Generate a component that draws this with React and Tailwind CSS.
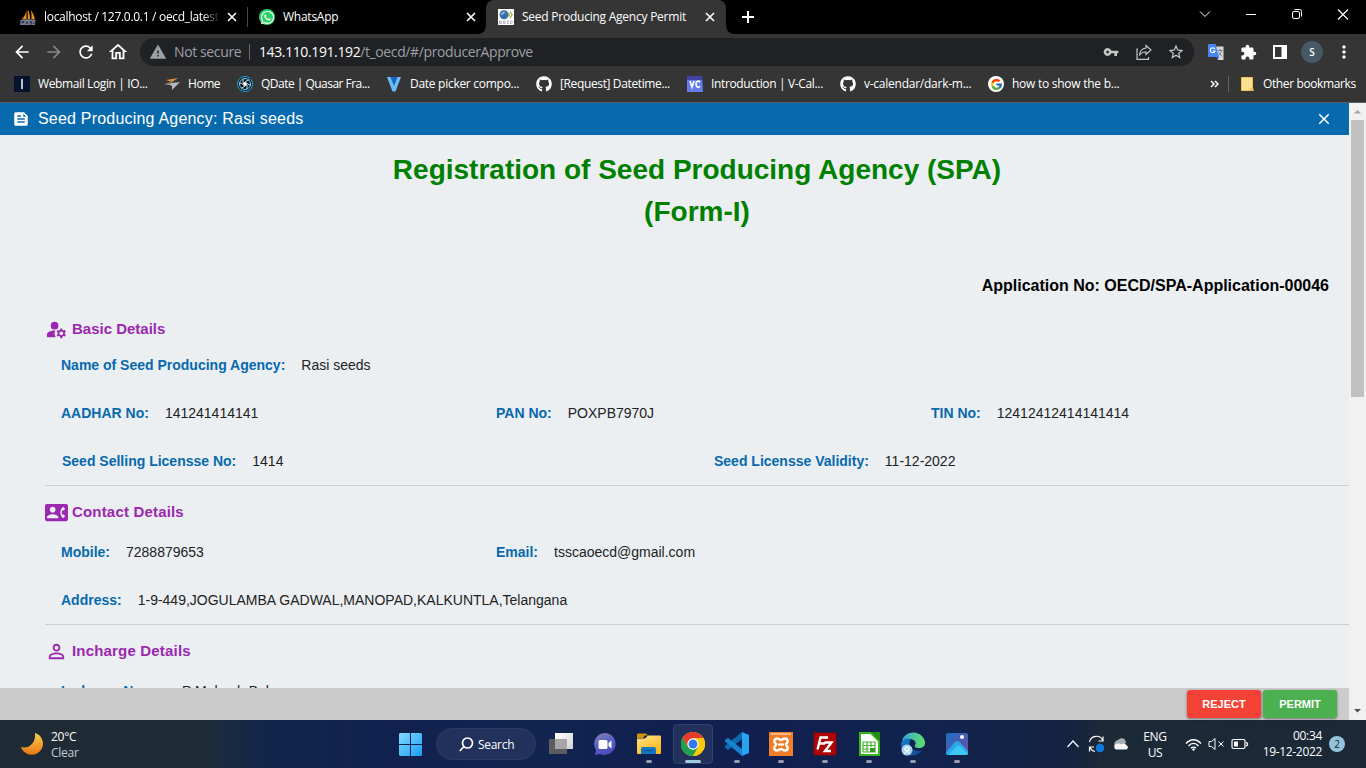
import React from "react";
import {
  MdArrowBack, MdArrowForward, MdRefresh, MdOutlineHome, MdWarning, MdVpnKey, MdStarBorder,
  MdExtension, MdMoreVert, MdClose, MdFeed, MdManageAccounts, MdContactPhone, MdPersonOutline,
} from "react-icons/md";
import { FaGithub, FaWhatsapp } from "react-icons/fa";
import { FcGoogle } from "react-icons/fc";

const UI = "font-['Open_Sans','Noto_Sans',sans-serif]";

/* ---------- browser chrome ---------- */

function TabClose() {
  return (
    <svg width="10" height="10" viewBox="0 0 10 10" className="shrink-0" stroke="#fff" strokeWidth="1.6">
      <path d="M1 1l8 8M9 1l-8 8" />
    </svg>
  );
}

function MyAdminIcon() {
  return (
    <svg width="16" height="16" viewBox="0 0 16 16" className="shrink-0">
      <path d="M6.6 .5C6.4 4 4.500 7.500 1.500 10.500l5-.6zM7.600.5l.2 9.400 2.200.1C10 6 9.200 2.700 7.600.5zM10.600 1c1 3 1.200 6 .7 9l3.700.5C14.200 6.500 12.500 3 10.600 1z" fill="#e8901c" />
      <path d="M.5 11c4-1 10-1 15-.2L15 16H0z" fill="#777a90" />
      <path d="M2 14.500v-2h2v1H2M6 15l1-2.500L8 15M12 12.500h-2v1.200h2V15h-2M14 12.500V15" stroke="#2b2d40" fill="none" strokeWidth=".8" />
    </svg>
  );
}

function OecdIcon() {
  return (
    <svg width="16" height="16" viewBox="0 0 16 16" className="shrink-0">
      <path d="M0 0h16v16H0z" fill="#fff" />
      <circle cx="6" cy="5.800" r="4.500" fill="#3a6ea8" />
      <path d="M2.500 5c1.500-2 3-2.500 5-2.300L6 5 3.500 6z" fill="#8db4dc" />
      <path d="M9.500 3l2 2.700-2 2.700M12 2.500l2.200 3.200L12 9" stroke="#93b04c" fill="none" strokeWidth="1.200" />
      <path d="M1.500 12h2v2.500h-2zM7.500 12h-2v2.500h2M5.500 13.200h2M11 12H9.500v2.500H11M12.500 12h1.200l.8 1.200-.8 1.300h-1.200z" stroke="#a9aeb4" fill="none" strokeWidth=".9" />
    </svg>
  );
}

function TabStrip() {
  return (
    <div className="flex h-[34px] bg-black text-[12px] text-white">
      <div className="flex w-[247px] items-center pl-5 pr-[10px]">
        <MyAdminIcon />
        <div className="ml-2 w-[176px] overflow-hidden whitespace-nowrap tracking-[-0.3px] [mask-image:linear-gradient(to_right,#000_158px,transparent)]">localhost / 127.0.0.1 / oecd_latest</div>
        <div className="ml-[7px]"><TabClose /></div>
      </div>
      <div className="mt-[7px] h-5 w-px bg-[#4a4a4a]" />
      <div className="flex w-[238px] items-center pl-[11px] pr-[10px]">
        <span className="relative flex size-4 items-center justify-center rounded-full bg-[#25d366]">
          <FaWhatsapp size={15} color="#fff" />
        </span>
        <span className="ml-2 tracking-[-0.25px]">WhatsApp</span>
        <span className="ml-auto"><TabClose /></span>
      </div>
      <div className="relative flex w-[240px] items-center rounded-t-lg bg-[#353535] pl-3 pr-[11px]">
        <svg className="absolute -left-2 bottom-0" width="8" height="8"><path d="M8 0v8H0a8 8 0 0 0 8-8" fill="#353535" /></svg>
        <svg className="absolute -right-2 bottom-0" width="8" height="8"><path d="M0 0v8h8a8 8 0 0 1-8-8" fill="#353535" /></svg>
        <OecdIcon />
        <span className="ml-2 whitespace-nowrap tracking-[-0.24px]">Seed Producing Agency Permit</span>
        <span className="ml-auto"><TabClose /></span>
      </div>
      <svg className="ml-4 mt-[11px]" width="12" height="12" stroke="#fff" strokeWidth="2"><path d="M6 0v12M0 6h12" /></svg>
      <svg className="ml-auto" width="176" height="34" fill="none" stroke="#fff">
        <path d="M10 11.500l5 5 5-5" />
        <path d="M56 14.500h10" />
        <rect x="102.500" y="11.500" width="7" height="7" rx="1.500" />
        <path d="M104.500 9.500h5a2 2 0 0 1 2 2v5" />
        <path d="M148 9.500l10 10M158 9.500l-10 10" strokeWidth="1.200" />
      </svg>
    </div>
  );
}

function Toolbar() {
  return (
    <div className="flex h-[34px] items-center bg-[#353535] pt-0.5 text-white">
      <div className="flex w-[140px] items-center gap-3 pl-3">
        <MdArrowBack size={20} className="shrink-0" />
        <MdArrowForward size={20} color="#868686" className="shrink-0" />
        <MdRefresh size={20} className="shrink-0" />
        <MdOutlineHome size={22} className="-ml-px shrink-0" />
      </div>
      <div className="flex h-7 w-[1054px] items-center rounded-full bg-[#202124] pl-[9px] pr-[9px] text-[14px] text-[#9aa0a6]">
        <MdWarning size={18} />
        <span className="ml-[7px] w-[67px] whitespace-nowrap pb-px tracking-[-0.38px]">Not secure</span>
        <span className="ml-[8px] h-4 w-px bg-[#6b6c6f]" />
        <span className="ml-[9px] whitespace-nowrap pb-px tracking-[-0.39px]"><span className="text-white">143.110.191.192</span>/t_oecd/#/producerApprove</span>
        <MdVpnKey size={16} className="ml-auto" color="#c4c7c5" />
        <svg className="ml-4" width="18" height="18" viewBox="0 0 18 18" fill="none" stroke="#c4c7c5" strokeWidth="1.200">
          <path d="M3 6H2v10.300h11.500V14" />
          <path d="M11 2.500l5 4.500-5 4.500V9C8 8.800 6 9.800 4.300 12.500 4.800 8 7 5.500 11 5z" />
        </svg>
        <MdStarBorder size={18} className="ml-[14px]" color="#c4c7c5" />
      </div>
      <svg className="ml-[14px]" width="16" height="16" viewBox="0 0 16 16">
        <path d="M7 2.500h8.500V16H10z" fill="#d5d7da" />
        <path d="M9.500 6.500h5M12 5v1.500M13.500 6.500C13 9 12 10.500 10 12M10.500 8.500l3.500 4" stroke="#68747d" fill="none" strokeWidth=".9" />
        <path d="M1 0h6.500l3.500 13H1a1 1 0 0 1-1-1V1a1 1 0 0 1 1-1z" fill="#4285f4" />
        <path d="M8 13h3l-1.500 3z" fill="#2a56c6" />
        <path d="M6.800 5A2.400 2.400 0 1 0 7 7H5" stroke="#fff" fill="none" strokeWidth="1.100" />
      </svg>
      <MdExtension size={17} className="ml-4" />
      <svg className="ml-4" width="14" height="14"><path d="M0 0h14v14H0z" fill="#fff" /><path d="M2 2h6.500v10H2z" fill="#353535" /></svg>
      <span className="ml-[14px] flex size-[22px] items-center justify-center rounded-full bg-[#455a64] text-[10px] font-semibold">S</span>
      <MdMoreVert size={20} className="ml-[11px]" />
    </div>
  );
}

function Bookmark({ className, icon, label }) {
  return (
    <div className={"flex shrink-0 items-center gap-2 whitespace-nowrap " + className}>
      <span className="flex size-4 shrink-0 items-center justify-center">{icon}</span>
      <span className="pb-px">{label}</span>
    </div>
  );
}

function Bookmarks() {
  return (
    <div className="flex h-[34px] items-center bg-[#353535] pb-0.5 pl-[14px] text-[12px] text-white">
      <Bookmark className="w-[150px] tracking-[-0.38px]" label="Webmail Login | IO..." icon={<svg width="16" height="16"><path d="M0 0h16v16H0z" fill="#06112d" /><path d="M7 3h2v10H7z" fill="#b9c0cf" /></svg>} />
      <Bookmark className="w-[73px] tracking-[-0.45px]" label="Home" icon={<svg width="16" height="16"><path d="M2 4l12-2-6 4z" fill="#e09040" /><path d="M0 8l16-2-8 8v-4L6 9z" fill="#b9b9b9" /><path d="M1 7.500l9-2.500-4 3z" fill="#8a7660" /></svg>} />
      <Bookmark className="w-[149px] tracking-[-0.52px]" label="QDate | Quasar Fra..." icon={
        <svg width="16" height="16" viewBox="-8 -8 16 16">
          <circle r="7.500" fill="#07131d" stroke="#25a5e4" />
          <circle r="5.500" fill="none" stroke="#87cfee" />
          <g stroke="#c7e8f5" fill="none"><path d="M-2-1v-4M0-2l4-2.500M2-.5l3.500 2M2 1v4M0 2l-4 2.500M-2 .5l-3.500-2" /></g>
          <circle r="2" fill="#fff" />
        </svg>} />
      <Bookmark className="w-[150px] tracking-[-0.28px]" label="Date picker compo..." icon={<svg width="16" height="16"><path d="M1 1h6l1 5 1-5h6L9.500 15.500h-3z" fill="#6dbaf5" /><path d="M4.500 1h7L8 10z" fill="#1867c0" /></svg>} />
      <Bookmark className="w-[151px] tracking-[-0.37px]" label="[Request] Datetime..." icon={<FaGithub size={16} />} />
      <Bookmark className="w-[153px] tracking-[-0.35px]" label="Introduction | V-Cal..." icon={
        <svg width="16" height="16"><path d="M1 0h14l1 16H0V4z" fill="#667eea" /><path d="M1 0h14v4H0z" fill="#4043a5" /><path d="M3 5l2 6 2-6M13 6.200c-2-2-4-.8-4 2s2 4 4 2" fill="none" stroke="#fff" strokeWidth="1.600" /></svg>} />
      <Bookmark className="w-[148px] tracking-[-0.25px]" label="v-calendar/dark-m..." icon={<FaGithub size={16} />} />
      <Bookmark className="w-[140px] tracking-[-0.26px]" label="how to show the b..." icon={<span className="flex size-4 items-center justify-center rounded-full bg-white"><FcGoogle size={13} /></span>} />
      <svg className="ml-auto" width="9" height="8" fill="none" stroke="#fff" strokeWidth="1.500"><path d="M1 1l3 3-3 3M5 1l3 3-3 3" /></svg>
      <span className="ml-[9px] h-4 w-px bg-[#5f6368]" />
      <svg className="ml-3" width="13" height="14"><path d="M.5.5h11v10l.8 3H.5z" fill="#fee191" stroke="#f0c34e" /><path d="M9.500 10l2.500 3.500H9z" fill="#e9b93e" /></svg>
      <span className="ml-[9px] w-[103px] whitespace-nowrap pb-px tracking-[-0.38px]">Other bookmarks</span>
    </div>
  );
}

/* ---------- page ---------- */

function Field({ label, value, className = "pl-4" }) {
  return (
    <div className={"flex h-12 items-center gap-4 whitespace-nowrap text-[14px] " + className}>
      <span className="font-bold text-[#0769ad]">{label}</span>
      <span className="text-[#222]">{value}</span>
    </div>
  );
}

function SectionTitle({ icon, children, className = "" }) {
  return (
    <div className={"flex h-6 items-center gap-1 text-[15px] font-bold text-[#9c27b0] " + className}>
      <span className="flex w-[23px] justify-center">{icon}</span>
      <span>{children}</span>
    </div>
  );
}

function Page() {
  return (
    <div className="flex h-[617px] font-['Liberation_Sans',Arial,sans-serif]">
      <div className="flex w-[1349px] flex-col">
        <div className="flex h-8 shrink-0 items-center bg-[#086aae] pl-3 pr-4 text-white">
          <MdFeed size={18} />
          <span className="ml-2 text-[16px] tracking-[0.2px]">Seed Producing Agency: Rasi seeds</span>
          <MdClose size={18} className="ml-auto" />
        </div>
        <main className="h-[553px] overflow-hidden bg-[#ebeff2] pl-[45px] pt-[14px]">
          <h1 className="text-center text-[28px] font-bold leading-[42px] text-[#008000]">Registration of Seed Producing Agency (SPA)<br />(Form-I)</h1>
          <div className="mt-[41px] h-6 pr-5 text-right text-[16px] font-bold leading-6 text-black">Application No: OECD/SPA-Application-00046</div>
          <SectionTitle className="mt-[19px]" icon={<MdManageAccounts size={23} />}>Basic Details</SectionTitle>
          <Field label="Name of Seed Producing Agency:" value="Rasi seeds" />
          <div className="grid grid-cols-[435px_435px_1fr]">
            <Field label="AADHAR No:" value="141241414141" />
            <Field label="PAN No:" value="POXPB7970J" />
            <Field label="TIN No:" value="12412412414141414" />
          </div>
          <div className="grid grid-cols-2 border-b border-[#cbced1]">
            <Field className="pl-[17px]" label="Seed Selling Licensse No:" value="1414" />
            <Field className="pl-[17px]" label="Seed Licensse Validity:" value="11-12-2022" />
          </div>
          <SectionTitle className="mt-[14px] mb-1 tracking-[0.18px]" icon={<MdContactPhone size={23} />}>Contact Details</SectionTitle>
          <div className="grid grid-cols-[435px_435px_1fr]">
            <Field label="Mobile:" value="7288879653" />
            <Field label="Email:" value="tsscaoecd@gmail.com" />
          </div>
          <div className="border-b border-[#cbced1]">
            <Field label="Address:" value="1-9-449,JOGULAMBA GADWAL,MANOPAD,KALKUNTLA,Telangana" />
          </div>
          <SectionTitle className="mt-[14px] mb-1 tracking-[0.18px]" icon={<MdPersonOutline size={23} />}>Incharge Details</SectionTitle>
          <Field label="Incharge Name:" value="P Mahesh Babu" />
        </main>
        <footer className="flex h-8 items-center justify-end gap-0.5 bg-[#cccccc] pr-3 text-[11px] font-bold text-white">
          <button className="h-7 w-[74px] rounded-[3px] bg-[#f44336] shadow-[0_1px_3px_rgba(0,0,0,0.45)]">REJECT</button>
          <button className="h-7 w-[74px] rounded-[3px] bg-[#4caf50] shadow-[0_1px_3px_rgba(0,0,0,0.45)]">PERMIT</button>
        </footer>
      </div>
      <div className="flex w-[17px] flex-col items-center bg-[#f1f1f1]">
        <svg width="17" height="17"><path d="M5 10.500h7L8.500 7z" fill="#a3a3a3" /></svg>
        <div className="h-[277px] w-[13px] bg-[#c1c1c1]" />
        <svg className="mt-auto" width="17" height="17"><path d="M5 6h7l-3.500 3.500z" fill="#505050" /></svg>
      </div>
    </div>
  );
}

/* ---------- taskbar ---------- */

function App24({ children, running = true }) {
  return (
    <div className="flex h-10 w-11 shrink-0 flex-col items-center pt-2">
      <svg width="24" height="24" viewBox="0 0 24 24">{children}</svg>
      {running && <span className="mt-1 h-[3px] w-1.5 rounded-full bg-[#979cb0]" />}
    </div>
  );
}

function Taskbar() {
  return (
    <div className="flex h-12 bg-[linear-gradient(90deg,#1e2b35_0px,#1f2c37_200px,#12264b_265px,#10214f_390px,#122450_540px,#0f1f50_700px,#11234e_940px,#14233f_1070px,#1c2937_1100px,#1b2936_1366px)] text-[12px] text-white">
      <div className="flex w-[390px] items-center pl-5">
        <svg width="24" height="24" viewBox="0 0 24 24">
          <defs><linearGradient id="moon" x2="0" y2="1"><stop stopColor="#f6cf4a" /><stop offset="1" stopColor="#ee7615" /></linearGradient></defs>
          <path d="M15 1c10 3 10.500 16 2 20.500-6 3-13.500.5-16-6.500 8 2 15-4 14-14z" fill="url(#moon)" />
        </svg>
        <div className="ml-[7px] pt-px leading-4 tracking-[-0.25px]"><div>20°C</div><div className="text-[#c6cbd0]">Clear</div></div>
      </div>
      <div className="flex w-[590px] items-center">
        <svg className="ml-[9px] shrink-0" width="23" height="23">
          <defs><linearGradient id="win" x2="1" y2="1"><stop stopColor="#84dcff" /><stop offset="1" stopColor="#1a9cf5" /></linearGradient></defs>
          <path d="M1 0h10v11H0V1zM12 0h10l1 1v10H12zM0 12h11v11H1l-1-1zM12 12h11v10l-1 1H12z" fill="url(#win)" />
        </svg>
        <div className="ml-[14px] flex h-8 w-[100px] shrink-0 items-center rounded-full border border-[#2b3a66] bg-[#21315c] pl-[22px]">
          <svg width="15" height="15" fill="none" stroke="#fff" strokeWidth="1.700"><circle cx="8.500" cy="6" r="5" /><path d="M5 9.500L.8 14" /></svg>
          <span className="ml-1 pt-0.5 text-[12px] tracking-[-0.3px]">Search</span>
        </div>
        <div className="ml-[3px] flex h-12 items-start pt-1">
          <App24 running={false}>
            <defs><linearGradient id="tv" x2="1" y2="1"><stop stopColor="#fff" /><stop offset="1" stopColor="#d2d2d2" /></linearGradient></defs>
            <path d="M0 7h18v15H0z" fill="#5d5d60" /><path d="M6 1h18v16H6z" fill="url(#tv)" /><path d="M6 7h12v10H6z" fill="#a6a6a8" />
          </App24>
          <App24 running={false}>
            <defs><linearGradient id="chat" x2="0.4" y2="1"><stop stopColor="#8f83a9" /><stop offset=".5" stopColor="#5b64c5" /><stop offset="1" stopColor="#514bbd" /></linearGradient></defs>
            <path d="M12 1a11 11 0 1 1-5 21l-5 1 1-5A11 11 0 0 1 12 1z" fill="url(#chat)" />
            <rect x="5.500" y="8" width="9" height="9" rx="1.500" fill="#fff" /><path d="M15.500 11l3-2.500v8l-3-2.500z" fill="#fff" />
          </App24>
          <App24>
            <defs><linearGradient id="fold" x2="0.6" y2="1"><stop stopColor="#ffe38b" /><stop offset="1" stopColor="#fcb91a" /></linearGradient></defs>
            <path d="M0 2.500a1 1 0 0 1 1-1h8l2 2h-3L6 6H0z" fill="#d99006" />
            <path d="M0 6.500h8l3-3h12a1 1 0 0 1 1 1V21a1 1 0 0 1-1 1H1a1 1 0 0 1-1-1z" fill="url(#fold)" />
            <path d="M4 22v-5a2 2 0 0 1 2-2h11a2 2 0 0 1 2 2v5z" fill="#1277c5" /><path d="M7 18.500h9" stroke="#0b5794" strokeWidth="1.200" />
          </App24>
          <div className="mx-0.5 flex h-10 w-10 shrink-0 flex-col items-center rounded border border-[#32416b] bg-[#22315c] pt-[7px]">
            <svg width="24" height="24" viewBox="0 0 24 24">
              <circle cx="12" cy="12" r="12" fill="#fdc80b" />
              <path d="M1.600 6A12 12 0 0 1 22.400 6H12L6.800 15z" fill="#e33b2e" />
              <path d="M1.600 6A12 12 0 0 0 12 24l5.200-9H6.800z" fill="#1da150" />
              <path d="M22.400 6A12 12 0 0 1 12 24l5.200-9L12 6z" fill="#fdc80b" />
              <circle cx="12" cy="12" r="5.700" fill="#fff" /><circle cx="12" cy="12" r="4.500" fill="#3578ec" />
            </svg>
            <span className="mt-1 h-[3px] w-4 rounded-full bg-[#9fcbdd]" />
          </div>
          <App24>
            <path d="M17 0l7 3v18l-7 3z" fill="#2aa4ee" />
            <path d="M17 0v7L3 18l-3-2v-2z" fill="#0b6bb3" /><path d="M3 6l14 11v7L0 9.500V8z" fill="#1583cf" />
          </App24>
          <App24>
            <path d="M0 0h24v24H0z" fill="#ef7e27" /><path d="M2 1h20v2H2z" fill="#ffb985" />
            <path d="M8 6.500c2 0 2.500 1.500 4 1.500s2-1.500 4-1.500a2.700 2.700 0 0 1 2.700 2.700c0 1.800-1.700 2-1.700 3.300s1.700 1.500 1.700 3.300A2.700 2.700 0 0 1 16 18.500c-2 0-2.500-1.500-4-1.500s-2 1.500-4 1.500a2.700 2.700 0 0 1-2.700-2.700c0-1.800 1.700-2 1.700-3.300s-1.700-1.500-1.700-3.300A2.700 2.700 0 0 1 8 6.500z" fill="none" stroke="#fff" strokeWidth="2.400" />
            <path d="M9 12.500h6" stroke="#fff" strokeWidth="2.200" />
          </App24>
          <App24>
            <path d="M1 1h22v22H1z" fill="#b00505" stroke="#8b0609" strokeWidth="1.500" strokeDasharray="2 1" />
            <path d="M4.500 17.500L7.500 5.500H15M6 11.500h6M11.500 10.500h7L12 19h6" fill="none" stroke="#fff" strokeWidth="2.400" />
          </App24>
          <App24>
            <path d="M3 1h11l8 8v14H3z" fill="#fff" stroke="#35b51b" strokeWidth="2" /><path d="M14 0h9v9z" fill="#258c10" />
            <path d="M6 10h12v10H6zM6 13.500h12M6 17h6M10 10v10M14 10v5" fill="none" stroke="#43b32d" strokeWidth="1.200" /><path d="M13 16h5v4h-5z" fill="#329b20" />
          </App24>
          <App24>
            <defs>
              <linearGradient id="edge1" x2="1"><stop stopColor="#31a8dc" /><stop offset="1" stopColor="#62de65" /></linearGradient>
              <linearGradient id="edge2" x2="1" y2="1"><stop stopColor="#1884d1" /><stop offset="1" stopColor="#123f89" /></linearGradient>
            </defs>
            <path d="M1 9C3-1 18-3 23 7c3 6-1 10-6 9-3 0-4-1-3-3 2-3-1-6-6-6C4 7 2 8 1 9z" fill="url(#edge1)" />
            <path d="M0 12C1 7 6 5 10 8c-3 2-3 12 11 11C14 27 1 25 0 12z" fill="url(#edge2)" />
            <circle cx="6" cy="18" r="5.500" fill="#a9d4ee" /><circle cx="6" cy="17" r="2" fill="none" stroke="#fff" strokeWidth="1.200" /><path d="M3.500 22c0-3 5-3 5 0" stroke="#fff" fill="none" />
          </App24>
          <App24>
            <defs><linearGradient id="pho" x2="1" y2="1"><stop stopColor="#196fc7" /><stop offset="1" stopColor="#7a4b9b" /></linearGradient></defs>
            <rect x="1" y="1" width="22" height="22" rx="2" fill="url(#pho)" />
            <path d="M1 20l9-10c1.500-1.500 3-1.500 4.500 0L23 19v2a2 2 0 0 1-2 2H3a2 2 0 0 1-2-2z" fill="#29a6e8" />
            <path d="M3 23l9-9c1-1 2-1 3 0l8 8-2 1z" fill="#3fc7f3" /><circle cx="17" cy="5" r="2" fill="#fff" />
          </App24>
        </div>
      </div>
      <div className="flex w-[386px] items-center pl-[86px]">
        <svg className="shrink-0" width="14" height="8" fill="none" stroke="#fff" strokeWidth="1.200"><path d="M1.500 7l5.500-6 5.500 6" /></svg>
        <svg className="ml-2 shrink-0" width="17" height="18" viewBox="0 0 17 18" fill="none" stroke="#fff" strokeWidth="1.200">
          <path d="M1.500 7A7 7 0 0 1 15 6M15 1.500V6h-4.500M1.500 16.500V12H6M2 12.500C3 14.500 4.500 16 7 16.500" /><circle cx="12" cy="13" r="4.200" fill="#0d7bdc" stroke="none" />
        </svg>
        <svg className="ml-[7px] shrink-0" width="17" height="12"><path d="M3 8a4 4 0 0 1 3-6c3-3 8-2 8 3L4 10z" fill="#a7adb2" /><path d="M4 11.500a3 3 0 0 1 0-5.500c2-1 4-.5 5 .5 2-2 5-1 5 .5 3 1 2 4.500 0 4.500z" fill="#f8f8f8" /></svg>
        <div className="ml-[11px] w-[30px] shrink-0 pt-px text-center leading-4 tracking-[-0.3px]">ENG<br />US</div>
        <svg className="ml-[15px] shrink-0" width="17" height="13" fill="none" stroke="#fff" strokeWidth="1.400"><path d="M1 5.500c4.500-5 10.500-5 15 0M3.500 8c3-3.500 7-3.500 10 0M6 10.300c1.500-1.600 3.500-1.600 5 0" /><circle cx="8.500" cy="11.500" r="1.200" fill="#fff" stroke="none" /></svg>
        <svg className="ml-1.5 shrink-0" width="17" height="14" fill="none" stroke="#fff"><path d="M1 4.500h2.500L7 1.500v11l-3.500-3H1zM10.500 4.500l5 5M15.500 4.500l-5 5" /></svg>
        <svg className="ml-1.5 shrink-0" width="18" height="12" fill="none" stroke="#fff" strokeWidth="1.200"><rect x="1" y="1.500" width="13" height="9" rx="1.500" /><path d="M15 4.500l1.500.7v2l-1.500.7" /><path d="M3 3.500h4v5H3z" fill="#fff" stroke="none" /></svg>
        <div className="ml-[11px] w-[62px] shrink-0 whitespace-nowrap text-right leading-4 tracking-[-0.33px]">00:34<br />19-12-2022</div>
        <span className="ml-[7px] flex size-4 shrink-0 items-center justify-center rounded-full bg-[#94c4dc] text-[10px] text-[#172630]">2</span>
      </div>
    </div>
  );
}

export default function App() {
  return (
    <div className={"h-[768px] w-[1366px] overflow-hidden bg-[#353535] " + UI}>
      <TabStrip />
      <Toolbar />
      <Bookmarks />
      <div className="h-px bg-[#5c5e61]" />
      <Page />
      <Taskbar />
    </div>
  );
}
